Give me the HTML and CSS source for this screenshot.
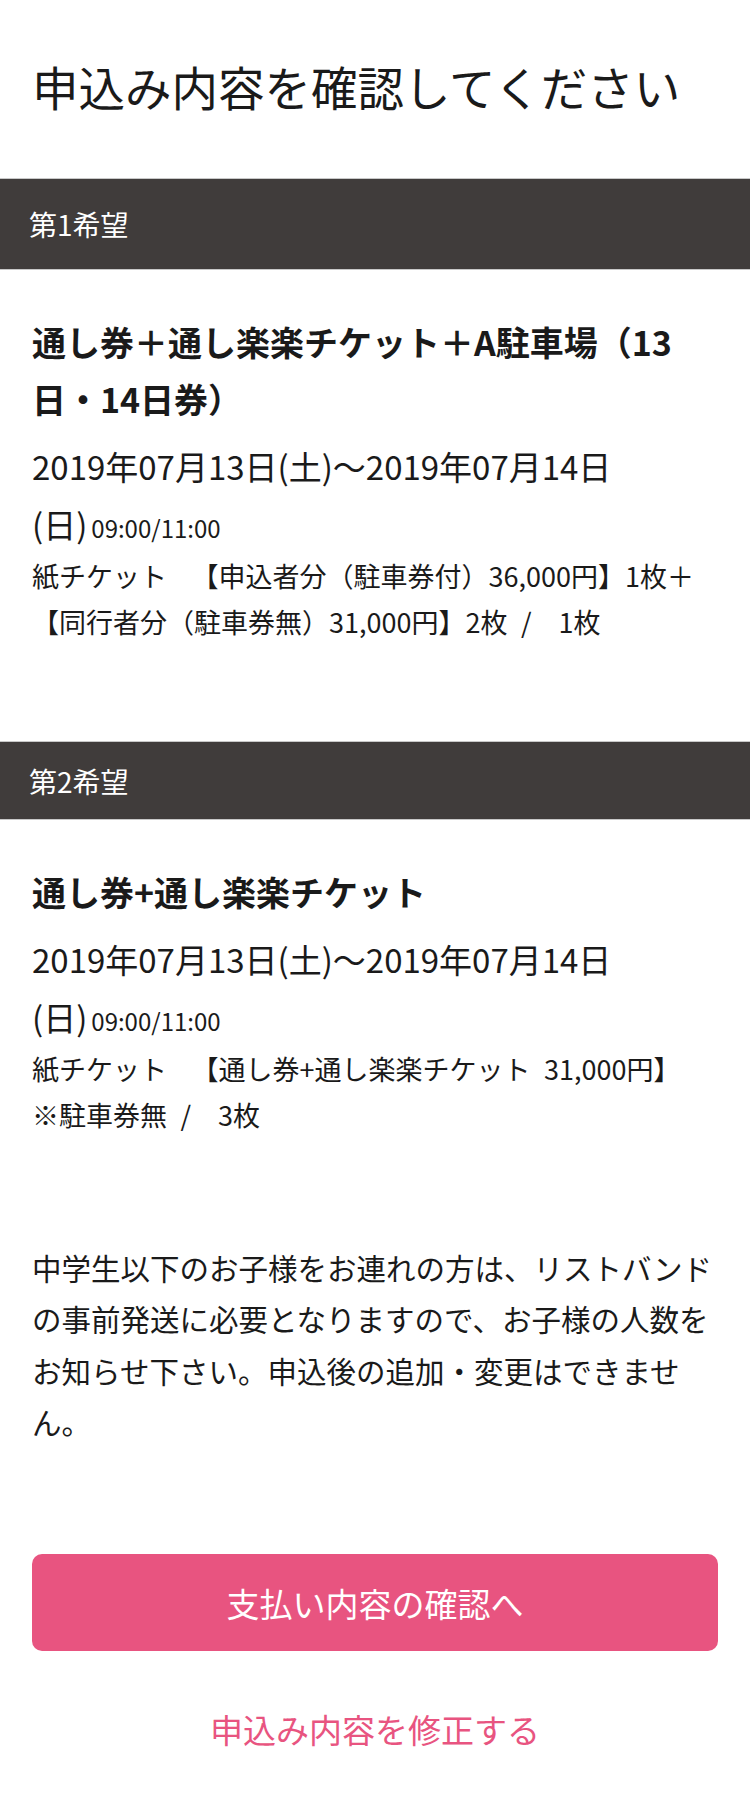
FILE: index.html
```html
<!DOCTYPE html>
<html lang="ja">
<head>
<meta charset="utf-8">
<title>申込み内容を確認してください</title>
<link rel="stylesheet" href="styles.css">
</head>
<body>
<main class="page">
  <h1 class="page-title">申込み内容を確認してください</h1>

  <section class="choice">
    <h2 class="bar bar-first">第1希望</h2>
    <div class="item">
      <h3 class="item-title item-title-narrow">通し券＋通し楽楽チケット＋A駐車場（13日・14日券）</h3>
      <p class="item-date">2019年07月13日(土)～2019年07月14日(日)<span class="item-time">09:00/11:00</span></p>
      <p class="item-ticket"><span class="ticket-type">紙チケット　</span>【申込者分（駐車券付）36,000円】1枚＋【同行者分（駐車券無）31,000円】2枚&ensp;/&emsp;1枚</p>
    </div>
  </section>

  <section class="choice">
    <h2 class="bar bar-second">第2希望</h2>
    <div class="item">
      <h3 class="item-title">通し券+通し楽楽チケット</h3>
      <p class="item-date">2019年07月13日(土)～2019年07月14日(日)<span class="item-time">09:00/11:00</span></p>
      <p class="item-ticket"><span class="ticket-type">紙チケット　</span>【通し券+通し楽楽チケット&ensp;31,000円】<br>※駐車券無&ensp;/&emsp;3枚</p>
    </div>
  </section>

  <p class="notice">中学生以下のお子様をお連れの方は、リストバンドの事前発送に必要となりますので、お子様の人数をお知らせ下さい。申込後の追加・変更はできません。</p>

  <div class="actions">
    <button class="btn-primary" type="button">支払い内容の確認へ</button>
    <a class="link-edit" href="#">申込み内容を修正する</a>
  </div>
</main>
</body>
</html>
```

FILE: styles.css
```css
html, body {
  margin: 0;
  padding: 0;
  background: #ffffff;
}

body {
  font-family: "Noto Sans CJK JP", "Noto Sans", sans-serif;
  color: #1c1c1c;
}

.page {
  width: 750px;
}

.page-title {
  margin: 0;
  padding: 54px 32px 60px;
  font-size: 46.5px;
  line-height: 64px;
  font-weight: 400;
  color: #1a1a1a;
}

.bar {
  margin: 0;
  display: flex;
  align-items: center;
  padding: 0 29px;
  background: #403c3b;
  color: #ffffff;
  font-size: 28px;
  font-weight: 400;
  border-top: 1px solid #c8c8c8;
  border-bottom: 1px solid #c8c8c8;
  box-sizing: border-box;
}

.bar-first {
  height: 92px;
}

.bar-second {
  height: 79px;
}

.item {
  padding: 43px 32px 0;
}

.item-title {
  margin: 0;
  font-size: 34px;
  line-height: 57px;
  font-weight: 700;
  color: #1a1a1a;
}

.item-title-narrow {
  max-width: 650px;
}

.item-date {
  margin: 10px 0 0;
  font-size: 33px;
  line-height: 58px;
  color: #1a1a1a;
}

.item-time {
  font-size: 24px;
  line-height: 1;
  margin-left: 4px;
}

.item-ticket {
  margin: 0;
  font-size: 27px;
  line-height: 46px;
  color: #1a1a1a;
}

.ticket-type {
  margin-right: 11px;
}

.choice + .choice {
  margin-top: 96px;
}

.notice {
  margin: 104px 0 0;
  padding: 0 32px;
  font-size: 29.5px;
  line-height: 51.3px;
  color: #1a1a1a;
}

.actions {
  display: flex;
  flex-direction: column;
  align-items: center;
  padding: 107px 32px 0;
}

.btn-primary {
  width: 686px;
  height: 97px;
  border: none;
  border-radius: 10px;
  background: #e85480;
  color: #ffffff;
  font-family: "Noto Sans CJK JP", "Noto Sans", sans-serif;
  font-size: 33px;
  font-weight: 400;
  padding: 0;
}

.link-edit {
  margin-top: 53px;
  font-size: 33px;
  line-height: 50px;
  color: #e85480;
  text-decoration: none;
}
```
